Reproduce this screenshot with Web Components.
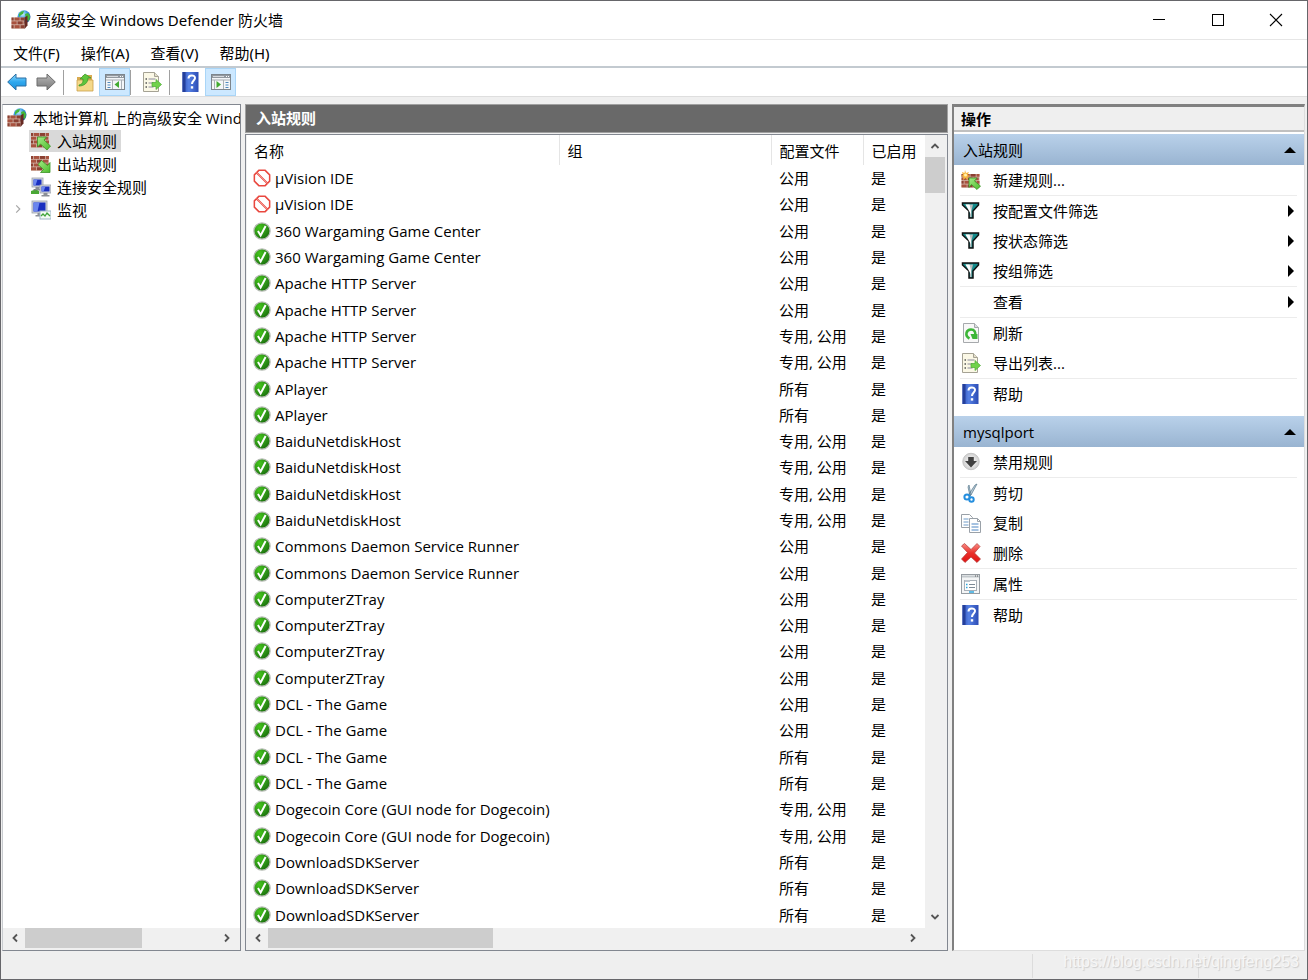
<!DOCTYPE html>
<html lang="zh-CN">
<head>
<meta charset="utf-8">
<title>高级安全 Windows Defender 防火墙</title>
<style>
html,body{height:100%;margin:0}
body{font:15px/20px "Open Sans","Noto Sans CJK SC",sans-serif;color:#000;background:#efefef}
</style>
</head>
<body>
<firewall-window></firewall-window>
<script>
const wall = (x, y, w, h) => {
  let s = `<rect x="${x}" y="${y}" width="${w}" height="${h}" fill="#d3b5a8"/>`;
  const rows = Math.round(h / 3.8), rh = h / rows;
  for (let r = 0; r < rows; r++) {
    const off = r % 2 ? 0 : -3;
    for (let c = 0; c < 5; c++) {
      const bx = Math.max(x, x + off + c * 6), ex = Math.min(x + w, x + off + c * 6 + 5.2);
      if (ex > bx) s += `<rect x="${bx}" y="${y + r * rh}" width="${ex - bx}" height="${rh - .8}" fill="${(r + c) % 2 ? '#a8523f' : '#8c4032'}"/>`;
    }
  }
  return s;
};
const GREEN = `<defs><linearGradient id="a" x2="1" y2="1"><stop offset="0" stop-color="#a4ec86"/><stop offset="1" stop-color="#4dbb2c"/></linearGradient></defs>`;
const monitor = (x, y, w, h) => `<rect x="${x}" y="${y}" width="${w}" height="${h}" fill="#d5d8de" stroke="#9aa0aa" stroke-width=".8"/><rect x="${x + 1.5}" y="${y + 1.5}" width="${w - 3}" height="${h - 3}" fill="#1a2fc0"/><path d="M${x + 1.5} ${y + 1.5}h${(w - 3) / 2}l-2 ${h - 3}h-${(w - 3) / 2 - 2}z" fill="#6b86ee"/><path d="M${x + w / 2 - 2} ${y + h}h4v2h2v1.500h-8v-1.500h2z" fill="#8b8f96"/>`;
const ICONS = {
  firewall: `<defs><radialGradient id="g" cx=".4" cy=".3" r=".7"><stop offset="0" stop-color="#cdefff"/><stop offset=".5" stop-color="#3a9be0"/><stop offset="1" stop-color="#1b4f9e"/></radialGradient></defs><circle cx="13" cy="6.800" r="6.500" fill="url(#g)"/><path d="M8 4c1-2 3-3 5-3l-1 3-2 1-2 2zM14 4l3-1 2 3-1 5-3-2z" fill="#43b838"/>${wall(.5, 7.5, 13, 11.5)}<path d="M13.500 7.500l3-2v10l-3 3.500z" fill="#672a22"/>`,
  inbound: `${GREEN}${wall(0, 2, 18, 15)}<path d="M6.500 6h9l-2.500 3 6.500 6-3.500 4-6.500-6-3 3z" fill="url(#a)" stroke="#3b9426" stroke-width=".8"/>`,
  outbound: `${GREEN}${wall(0, 2, 18, 15)}<path d="M19 18.500h-9.500l3-3-5.500-5 3.500-4 6 5 2.500-3z" fill="url(#a)" stroke="#3b9426" stroke-width=".8"/>`,
  newrule: `${GREEN}${wall(.5, 4, 18, 14)}<path d="M8 8h8l-2.500 3 6 5-3.500 3.500-5.500-5-2.500 3z" fill="url(#a)" stroke="#3b9426" stroke-width=".8"/><path d="M4 0l1 3 3-1-1.500 3L9 6 6.500 7 7 10 4.500 8 2 10l.500-3L0 6l2-1L1 2l2.500 1z" fill="#f8b63c"/><circle cx="4.500" cy="5" r="1.500" fill="#fff1b0"/>`,
  connection: `${monitor(1, 1, 11, 9)}${monitor(9, 8, 11, 8)}<path d="M0 14l3-1h3l2 1v3H0z" fill="#49a735"/><path d="M4 12v2" stroke="#777"/>`,
  monitoring: `${monitor(1, 1, 15, 12)}<rect x="9" y="11" width="11" height="8" fill="#f3faf4" stroke="#9fb6c8"/><path d="M10 16l2-2 2 2 2-3 3 3" fill="none" stroke="#3fa43a" stroke-width="1.300"/>`,
  back: `<defs><linearGradient id="g" x2="0" y2="1"><stop offset="0" stop-color="#8fdcff"/><stop offset=".5" stop-color="#2fa8ee"/><stop offset="1" stop-color="#1d8fd8"/></linearGradient></defs><path d="M.7 10L9 2v4h10v8H9v4z" fill="url(#g)" stroke="#2a6fa4" stroke-linejoin="round"/>`,
  forward: `<defs><linearGradient id="g" x2="0" y2="1"><stop offset="0" stop-color="#b9b9b9"/><stop offset="1" stop-color="#777"/></linearGradient></defs><path d="M19.300 10L11 2v4H1v8h10v4z" fill="url(#g)" stroke="#6c6c6c" stroke-linejoin="round"/>`,
  folder: `<path d="M2 5h5l1-2h9v15H2z" fill="#d9ab51"/><path d="M2 8h16v11H2z" fill="#f5d98a" stroke="#c99f49" stroke-width=".8"/><path d="M4 13c4-1 4-3 4-6H5l5-5 6 4h-3c0 5-4 8-9 8z" fill="#5fc63c" stroke="#35932a" stroke-width=".7"/>`,
  paneleft: `<rect x=".5" y="2.500" width="19" height="15" fill="#f4f6f8" stroke="#7d858c"/><rect x="1" y="3" width="18" height="3" fill="#9299a0"/><path d="M2 4.500h11" stroke="#d7dade"/><path d="M15 4.500h3" stroke="#fff" stroke-dasharray="1 1"/><path d="M1 8h18" stroke="#a7adb3"/><path d="M2.500 10.500h3m-3 2.500h3m-3 2.500h3" stroke="#4d88bd" stroke-width="1.200"/><path d="M7.500 8v9M16.500 8v9" stroke="#aab0b6"/><path d="M14 9v7l-4.500-3.500z" fill="#42ab30"/>`,
  paneright: `<rect x=".5" y="2.500" width="19" height="15" fill="#f4f6f8" stroke="#7d858c"/><rect x="1" y="3" width="18" height="3" fill="#9299a0"/><path d="M2 4.500h11" stroke="#d7dade"/><path d="M15 4.500h3" stroke="#fff" stroke-dasharray="1 1"/><path d="M1 8h18" stroke="#a7adb3"/><path d="M14.500 10.500h3m-3 2.500h3m-3 2.500h3" stroke="#4d88bd" stroke-width="1.200"/><path d="M12.500 8v9M3.500 8v9" stroke="#aab0b6"/><path d="M5.500 9v7l4.500-3.500z" fill="#42ab30"/>`,
  export: `<path d="M1.500.5h11l4 4v15h-15z" fill="#fbf8e6" stroke="#a5a294"/><path d="M12.500.5v4h4" fill="#e4dfca" stroke="#a5a294"/><path d="M3.500 7h1.500m-1.500 4h1.500m-1.500 4h1.500" stroke="#555" stroke-width="1.400"/><path d="M6.500 7h7m-7 4h5m-5 4h5" stroke="#8a8a9c" stroke-width="1.200"/><path d="M10 10.500h4v-3l5.500 5-5.500 5v-3h-4z" fill="#70d24a" stroke="#4ba935" stroke-width=".7"/>`,
  help: `<defs><linearGradient id="g"><stop offset="0" stop-color="#2f52b8"/><stop offset=".4" stop-color="#5580e4"/><stop offset="1" stop-color="#2c4cb4"/></linearGradient></defs><rect x="1.500" y="0" width="16" height="20" fill="url(#g)"/><rect x="1.500" y="0" width="3" height="20" fill="#243f9b"/><path d="M7.500 6.500c0-4 6.500-4 6.500-.5 0 2.500-3 2.700-3 6" fill="none" stroke="#fff" stroke-width="2"/><rect x="9.800" y="14.200" width="2.400" height="2.400" fill="#fff"/>`,
  blocked: `<path d="M6.500 1.500h7l5 5v7l-5 5h-7l-5-5v-7z" fill="#fff" stroke="#e9483f" stroke-width="1.700"/><path d="M4 4l12 12" stroke="#e9483f" stroke-width="2.200"/><path d="M4 4l12 12" stroke="#fbd3cf" stroke-width=".6"/>`,
  allowed: `<defs><radialGradient id="g" cx=".35" cy=".3" r=".8"><stop offset="0" stop-color="#45c51c"/><stop offset=".6" stop-color="#2b8f16"/><stop offset="1" stop-color="#156808"/></radialGradient></defs><circle cx="10" cy="10" r="9" fill="url(#g)" stroke="#b5bbb3" stroke-width="1.400"/><path d="M5.500 10l3 5L14 4.500" fill="none" stroke="#fff" stroke-width="2.200"/>`,
  filter: `<path d="M1.500 2h16v2l-5.500 6v7H8v-7L1.500 4z" fill="#138a8a" stroke="#111" stroke-width="1.500"/><path d="M4.500 3.500H12l-1.500 6.500v6H9V9.500z" fill="#b9bcbc"/><path d="M4.500 3.500h4l1.500 6v4z" fill="#fff"/>`,
  none: ``,
  refresh: `<path d="M2.500.5h11l4 4v15h-15z" fill="#f8f8f8" stroke="#a6a9ac"/><path d="M13.500.5v4h4" fill="#dadde0" stroke="#a6a9ac"/><path d="M8.500 15.500C3.500 13 5 6.500 10 6.500c3.500 0 5 3 4 6" fill="none" stroke="#3db638" stroke-width="2.600"/><path d="M9.500 11h7v5h-5z" fill="#3db638"/>`,
  disable: `<defs><radialGradient id="g"><stop offset="0" stop-color="#fff"/><stop offset="1" stop-color="#cfcfcf"/></radialGradient></defs><circle cx="10" cy="9.500" r="8.200" fill="url(#g)" stroke="#c4c4c4"/><path d="M7.200 5h5.600v4h3.200L10 15.500 4 9h3.200z" fill="#404040"/>`,
  cut: `<path d="M8 2l2 10-1 1L7 4zM16 1l-6 11-2-1 6-9z" fill="#b8cad6" stroke="#58788c" stroke-width=".7"/><circle cx="6" cy="14" r="2.600" fill="none" stroke="#258ede" stroke-width="2"/><circle cx="10.500" cy="16.500" r="2.200" fill="none" stroke="#258ede" stroke-width="2"/>`,
  copy: `<path d="M.5 1.500h8l3 3v10H.5z" fill="#fff" stroke="#9aa1a8"/><path d="M2.500 6h5m-5 3h5m-5 3h5" stroke="#6e9bc8"/><path d="M8.500 5.500h8l3 3v11h-11z" fill="#fff" stroke="#9aa1a8"/><path d="M16.500 5.500v3h3" fill="none" stroke="#9aa1a8"/><path d="M10.500 11h7m-7 3h7m-7 3h7" stroke="#4c86c4"/>`,
  delete: `<defs><linearGradient id="g" x2="0" y2="1"><stop offset="0" stop-color="#f98c84"/><stop offset=".5" stop-color="#e9302b"/><stop offset="1" stop-color="#e01212"/></linearGradient></defs><path d="M.5 3l3-2.500 6.500 6L16 .5l3 3L13.500 10l6 6-3.500 3.500-6-5.500-6 5.500-3.500-3.500 6-6.500z" fill="url(#g)" stroke="#b03a36" stroke-width=".7"/>`,
  properties: `<rect x=".5" y=".5" width="18" height="19" fill="#f4f5f6" stroke="#969ca2"/><path d="M1 2.500h17" stroke="#c3c8cc" stroke-width="2"/><path d="M14 2h3" stroke="#555" stroke-dasharray="1 1"/><rect x="3.500" y="6.500" width="12" height="10" fill="#fff" stroke="#a8b0b8"/><path d="M4 6h5v2H4z" fill="#bcc5cd"/><path d="M8 10.500h6m-6 3h6" stroke="#7d8a96"/><path d="M5 10.500h1.500m-1.500 3h1.500M8 18h5" stroke="#2ea8e0" stroke-width="1.500"/>`,
  minimize: `<path d="M4 9.500h12" stroke="#000" shape-rendering="crispEdges"/>`,
  maximize: `<rect x="4.500" y="4.500" width="11" height="11" fill="none" stroke="#000"/>`,
  close: `<path d="M4 4l12 12M16 4L4 16" stroke="#000" stroke-width="1.100"/>`,
  left: `<path d="M12 6.500L8.500 10l3.500 3.500" fill="none" stroke="#555" stroke-width="1.800"/>`,
  right: `<path d="M8 6.500l3.500 3.500L8 13.500" fill="none" stroke="#555" stroke-width="1.800"/>`,
  up: `<path d="M6.500 12L10 8.500l3.500 3.500" fill="none" stroke="#555" stroke-width="1.800"/>`,
  down: `<path d="M6.500 8l3.500 3.500L13.500 8" fill="none" stroke="#555" stroke-width="1.800"/>`,
  expand: `<path d="M8 6l4 4-4 4" fill="none" stroke="#a6a6a6" stroke-width="1.300"/>`,
  collapse: `<path d="M4 13l6-6 6 6z" fill="#000"/>`,
  submenu: `<path d="M8 4l6 6-6 6z" fill="#000"/>`
};

const define = (name, html) => {
  const t = document.createElement('template');
  customElements.define(name, class extends HTMLElement {
    constructor() {
      super();
      t.innerHTML = typeof html === 'function' ? html(this) : html;
      this.attachShadow({ mode: 'open' }).append(t.content.cloneNode(true));
    }
  });
};
const icon = (name, size = 20) => `<ui-icon name="${name}" size="${size}"></ui-icon>`;
const RESET = `:host,*{box-sizing:border-box}button{all:unset;box-sizing:border-box;font:inherit;color:inherit;cursor:default}`;

define('ui-icon', el => `<style>:host{display:block;flex:none}svg{display:block}</style>
<svg viewBox="0 0 20 20" width="${el.getAttribute('size')}" height="${el.getAttribute('size')}" aria-hidden="true">${ICONS[el.getAttribute('name')]}</svg>`);

define('title-bar', `<style>${RESET}
:host{display:flex;align-items:center;height:39px;background:#fff;border-bottom:1px solid #e6e6e6;padding-left:10px;font-family:"Noto Sans","Noto Sans CJK SC",sans-serif}
h1{flex:1;margin:0 0 0 5px;font:inherit}
button{width:59px;height:38px;display:grid;place-items:center}
button:last-child{width:60px;padding-right:2px}
</style>${icon('firewall')}<h1><slot></slot></h1>
<button aria-label="最小化">${icon('minimize')}</button><button aria-label="最大化">${icon('maximize')}</button><button aria-label="关闭">${icon('close')}</button>`);

define('menu-bar', `<style>${RESET}
:host{display:flex;height:28px;background:#fff;border-bottom:2px solid #c3cad0;padding-left:2px;font-family:"Noto Sans","Noto Sans CJK SC",sans-serif}
button{padding:0 11px 0 10px;line-height:26px}
</style>${['文件(F)', '操作(A)', '查看(V)', '帮助(H)'].map(m => `<button>${m}</button>`).join('')}`);

define('tool-bar', `<style>${RESET}
:host{display:flex;align-items:center;height:29px;background:#fff;border-bottom:1px solid #dedede;padding-left:1px}
button{width:29px;height:28px;display:grid;place-items:center}
button.on{background:#cce8ff;border:1px solid #a9d5f7;width:31px}
i{width:1px;height:25px;background:#a0a0a0;margin:0 3px}
.on+i{margin-left:0}
i+button{margin-left:3px}
</style>
<button aria-label="后退">${icon('back')}</button><button aria-label="前进">${icon('forward')}</button><i></i>
<button aria-label="上一级">${icon('folder')}</button><button class="on" aria-label="显示控制台树">${icon('paneleft')}</button><i></i>
<button aria-label="导出列表">${icon('export')}</button><i></i>
<button aria-label="帮助">${icon('help')}</button><button class="on" aria-label="显示操作窗格">${icon('paneright')}</button>`);

define('scroll-bar', el => {
  const v = el.hasAttribute('vertical');
  return `<style>${RESET}
:host{display:flex;flex:none;background:#f0f0f0;${v ? 'flex-direction:column;width:20px' : 'height:20px'}}
button{flex:none;display:grid;place-items:center;${v ? 'height:22px' : 'width:21px'}}
.track{flex:1;display:flex;${v ? 'flex-direction:column' : ''}}
.thumb{background:#cdcdcd;flex:none;${v ? 'height' : 'width'}:${el.getAttribute('thumb')}}
</style><button aria-label="${v ? '向上' : '向左'}">${icon(v ? 'up' : 'left')}</button><div class="track"><div class="thumb"></div></div><button aria-label="${v ? '向下' : '向右'}">${icon(v ? 'down' : 'right')}</button>`;
});

define('tree-item', el => `<style>${RESET}
:host{display:flex;align-items:center;height:23px;white-space:nowrap;padding-left:4px}
:host([level="2"]){padding-left:6px}
.tw{width:20px;height:20px;flex:none}
.row{display:flex;align-items:center;gap:6px;height:22px;padding-right:4px}
:host([level="2"]) .row{padding-left:2px}
:host([selected]) .row{background:#d9d9d9}
</style>${el.getAttribute('level') === '2' ? `<div class="tw">${el.hasAttribute('expandable') ? icon('expand', 18) : ''}</div>` : ''}
<button class="row">${icon(el.getAttribute('icon'))}<span><slot></slot></span></button>`);

define('console-tree', `<style>
:host{display:flex;flex-direction:column;background:#fff;border:1px solid #828790;border-left-color:#c9ccd0}
nav{flex:1;overflow:hidden;padding-top:1px}
.foot{background:#f0f0f0;padding:0 3px 2px 1px}
</style><nav>
<tree-item level="1" icon="firewall">本地计算机 上的高级安全 Wind</tree-item>
<tree-item level="2" icon="inbound" selected>入站规则</tree-item>
<tree-item level="2" icon="outbound">出站规则</tree-item>
<tree-item level="2" icon="connection">连接安全规则</tree-item>
<tree-item level="2" icon="monitoring" expandable>监视</tree-item>
</nav><div class="foot"><scroll-bar thumb="117px"></scroll-bar></div>`);

const G = '公用', B = '专用, 公用', A = '所有';
const RULES = [
  ['µVision IDE', [G, G], 'blocked'], ['360 Wargaming Game Center', [G, G]], ['Apache HTTP Server', [G, G, B, B]],
  ['APlayer', [A, A]], ['BaiduNetdiskHost', [B, B, B, B]], ['Commons Daemon Service Runner', [G, G]],
  ['ComputerZTray', [G, G, G, G]], ['DCL - The Game', [G, G, A, A]],
  ['Dogecoin Core (GUI node for Dogecoin)', [B, B]], ['DownloadSDKServer', [A, A, A]]
].flatMap(([name, profiles, state = 'allowed']) => profiles.map(p => ({ name, p, state })));

define('rule-table', `<style>${RESET}
:host{display:block;background:#fff}
table{width:100%;height:100%;border-collapse:collapse;table-layout:fixed}
th,td{padding:0 0 0 8px;text-align:left;font-weight:400;white-space:nowrap}
th{height:30px;border-right:1px solid #e5e5e5;padding-top:2px}
th:last-child{border-right:0}
th:first-child{padding-left:7px}
.g{width:212px}.p{width:92px}.e{width:62px}
.n{display:flex;align-items:center;gap:4px}
td:first-child{padding-left:6px}
</style><table><thead><tr><th>名称</th><th class="g">组</th><th class="p">配置文件</th><th class="e">已启用</th></tr></thead><tbody>
${RULES.map(r => `<tr><td><div class="n">${icon(r.state, 18)}<span>${r.name}</span></div></td><td></td><td>${r.p}</td><td>是</td></tr>`).join('')}
</tbody></table>`);

define('rule-panel', `<style>${RESET}
:host{display:flex;flex-direction:column;min-width:0}
h2{margin:0 0 1px;height:29px;background:#696969;border:1px solid #a0a0a0;color:#fff;font-size:15px;line-height:27px;padding-left:10px}
.list{flex:1;display:flex;flex-direction:column;border:1px solid #828790;background:#f0f0f0;padding:0 2px 2px 1px}
.body{flex:1;display:flex}
rule-table{flex:1;min-width:0}
.foot{padding-right:22px}
</style><h2>入站规则</h2><div class="list"><div class="body"><rule-table></rule-table><scroll-bar vertical thumb="36px"></scroll-bar></div>
<div class="foot"><scroll-bar thumb="225px"></scroll-bar></div></div>`);

define('action-item', el => `<style>${RESET}
:host{display:block}
button{display:flex;align-items:center;width:100%;height:30px;padding:0 4px 0 7px}
span{flex:1;margin-left:12px}
:host([sep])::after{content:"";display:block;height:1px;margin:0 7px 0 6px;background:#ececec}
</style><button>${icon(el.getAttribute('icon'))}<span><slot></slot></span>${el.hasAttribute('more') ? icon('submenu') : ''}</button>`);

define('action-group', el => `<style>${RESET}
:host{display:block;margin-bottom:7px}
.head{display:flex;align-items:center;width:100%;height:31px;padding:0 4px 0 9px;background:linear-gradient(#b9d1ea,#99b4d1)}
.head span{flex:1}
</style><button class="head" aria-expanded="true"><span>${el.getAttribute('heading')}</span>${icon('collapse')}</button><slot></slot>`);

define('action-panel', `<style>
:host{display:block;background:#fff;border-top:3px solid #808080;border-left:2px solid #808080;border-right:1px solid #ddd;border-bottom:1px solid #ddd}
h2{margin:0 0 2px;height:25px;background:#efefef;border-bottom:2px solid #c0c0c0;font-size:15px;line-height:25px;padding-left:7px;box-sizing:border-box}
</style><h2>操作</h2>
<action-group heading="入站规则">
<action-item icon="newrule" sep>新建规则...</action-item>
<action-item icon="filter" more>按配置文件筛选</action-item>
<action-item icon="filter" more>按状态筛选</action-item>
<action-item icon="filter" more sep>按组筛选</action-item>
<action-item icon="none" more sep>查看</action-item>
<action-item icon="refresh">刷新</action-item>
<action-item icon="export" sep>导出列表...</action-item>
<action-item icon="help">帮助</action-item>
</action-group>
<action-group heading="mysqlport">
<action-item icon="disable" sep>禁用规则</action-item>
<action-item icon="cut">剪切</action-item>
<action-item icon="copy">复制</action-item>
<action-item icon="delete" sep>删除</action-item>
<action-item icon="properties" sep>属性</action-item>
<action-item icon="help">帮助</action-item>
</action-group>`);

define('status-bar', `<style>
:host{display:flex;align-items:center;justify-content:flex-end;height:28px;padding-top:1px;box-sizing:border-box;position:relative}
i{height:24px;border-left:1px solid #dcdcdc;width:165px}
i+i{width:108px}
span{position:absolute;right:8px;top:0;font:16px/22px "Liberation Sans",sans-serif;color:#f6f6f6;text-shadow:1px 1px 1px #ccc}
</style><i></i><i></i><span>https://blog.csdn.net/qingfeng253</span>`);

define('firewall-window', `<style>
:host{display:flex;flex-direction:column;min-height:100vh;box-sizing:border-box;border:1px solid #66666a;background:#efefef}
main{flex:1;display:flex;gap:4px;padding:7px 2px 0 1px}
console-tree{width:239px;box-sizing:border-box}
rule-panel{flex:1}
action-panel{width:353px;box-sizing:border-box}
</style>
<title-bar>高级安全 Windows Defender 防火墙</title-bar>
<menu-bar></menu-bar><tool-bar></tool-bar>
<main><console-tree></console-tree><rule-panel></rule-panel><action-panel></action-panel></main>
<status-bar></status-bar>`);
</script>
</body>
</html>
